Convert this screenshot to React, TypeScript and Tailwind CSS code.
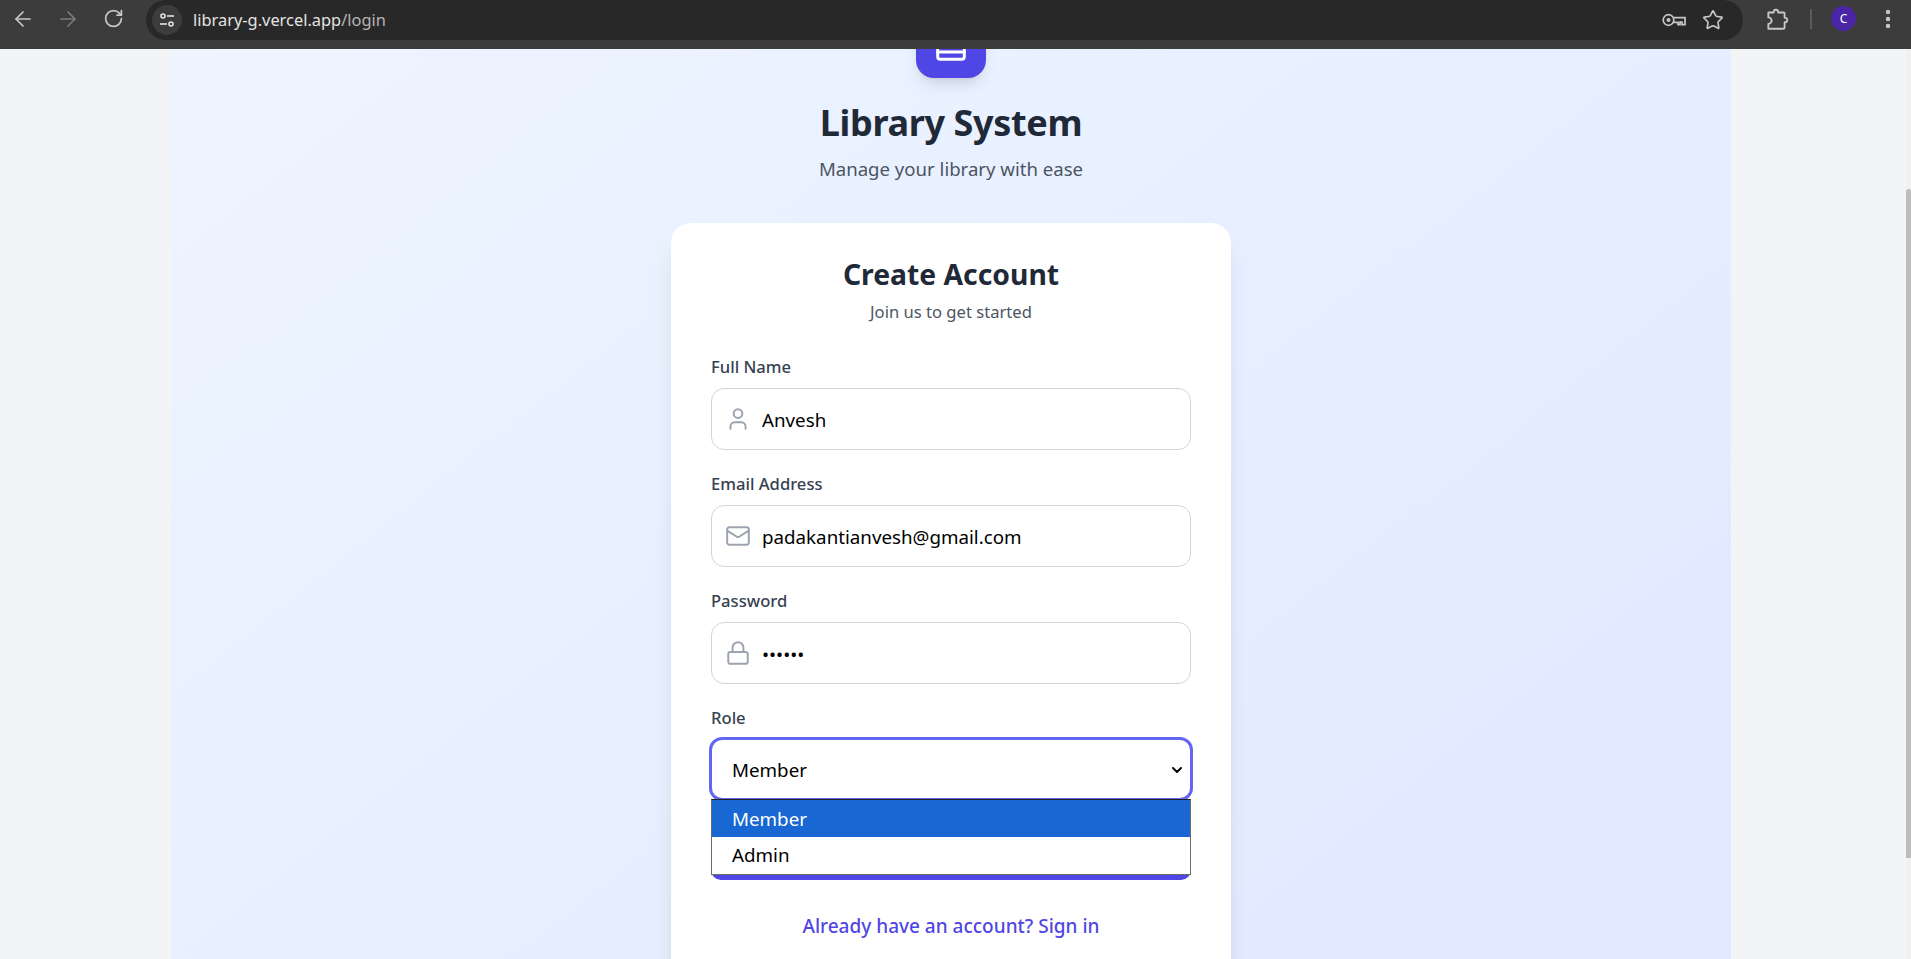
import { User, Mail, Lock, ArrowLeft, ArrowRight, RotateCw, Star, EllipsisVertical, ChevronDown } from "lucide-react";

const font = "font-['Noto_Sans',sans-serif]";

function Key() {
  return (
    <svg width="24" height="14" viewBox="0 0 24 14" fill="none" stroke="#c7c7c7" strokeWidth="1.7">
      <circle cx="6.5" cy="7" r="5.3" />
      <circle cx="6.5" cy="7" r="2" fill="#c7c7c7" stroke="none" />
      <path d="M11.3 4.6H23v7h-3v-2.4h-2v2.4h-2V9.4h-4.7" />
    </svg>
  );
}

function Tune() {
  return (
    <svg width="18" height="18" viewBox="0 0 18 18" fill="none" stroke="#e3e3e3" strokeWidth="1.6">
      <circle cx="5" cy="5" r="2" />
      <path d="M9 5h7" />
      <circle cx="13" cy="13" r="2" />
      <path d="M2 13h7" />
    </svg>
  );
}

function Extension() {
  return (
    <svg width="26" height="26" viewBox="0 0 24 24" fill="none" stroke="#c7c7c7" strokeWidth="1.7" strokeLinejoin="round">
      <path d="M4 6h5v-.5a2 2 0 0 1 4 0V6h5a1 1 0 0 1 1 1v4h.5a2 2 0 0 1 0 4H19v5a1 1 0 0 1-1 1H4v-4.5a3 3 0 0 0 0-6z" />
    </svg>
  );
}

function Field({ label, icon, value, type = "text" }: { label: string; icon: React.ReactNode; value: string; type?: string }) {
  return (
    <div className="mb-[23px]">
      <label className="block h-[21px] text-[16.6px] leading-[21px] font-medium text-[#374151] mb-[11px]">{label}</label>
      <div className="relative">
        <div className="absolute left-[14px] top-1/2 -translate-y-1/2 flex text-[#9ca3af]">{icon}</div>
        <input
          readOnly
          type={type}
          value={value}
          className="block w-full h-[62px] rounded-[13px] border-[1.5px] border-[#d1d5db] bg-white pl-[50px] pr-4 text-[18.75px] text-black outline-none"
        />
      </div>
    </div>
  );
}

export default function App() {
  return (
    <div className={`${font} h-[959px] w-full overflow-hidden flex flex-col bg-[#f3f4f6]`}>
      <header className="h-[49px] shrink-0 bg-[#3c3c3c] flex items-start text-[#c7c7c7]">
        <div className="flex items-center h-[37px] w-[146px] shrink-0 pl-[11px]">
          <ArrowLeft size={24} strokeWidth={1.7} className="text-[#c7c7c7]" />
          <ArrowRight size={24} strokeWidth={1.7} className="ml-[21px] text-[#7a7a7a]" />
          <RotateCw size={21} strokeWidth={2} className="ml-[23px] text-[#c7c7c7]" />
        </div>
        <div className="h-[40px] w-[1597px] shrink-0 rounded-full bg-[#282828] flex items-center pl-[6px] pr-[19px]">
          <div className="w-[30px] h-[30px] rounded-full bg-[#3c3c3c] flex items-center justify-center shrink-0">
            <Tune />
          </div>
          <span className="ml-[11px] text-[16.4px] text-[#e3e3e3]">
            library-g.vercel.app<span className="text-[#b4b4b4]">/login</span>
          </span>
          <div className="ml-auto flex items-center gap-[16px]">
            <Key />
            <Star size={22} strokeWidth={1.8} className="text-[#c7c7c7]" />
          </div>
        </div>
        <div className="flex-1 h-[37px] flex items-center pl-[21px]">
          <Extension />
          <div className="ml-[20px] w-[2px] h-[20px] bg-[#5c5c5c]" />
          <div className="ml-[19px] w-[25px] h-[25px] rounded-full bg-[#4a26a6] text-white text-[12px] flex items-center justify-center">C</div>
          <EllipsisVertical size={24} strokeWidth={2.5} className="ml-[20px] text-[#c7c7c7]" />
        </div>
      </header>

      <div className="flex-1 flex min-h-0 overflow-hidden">
        <div className="w-[171px] shrink-0" />
        <main className="w-[1560px] shrink-0 bg-[linear-gradient(to_bottom_right,#eff6ff,#e0e7ff)] bg-[length:100%_1238px] bg-[position:0_-190px] flex flex-col items-center">
          <div className="w-[70px] h-[70px] -mt-[41px] shrink-0 rounded-[18px] bg-[#4f46e5] shadow-lg flex items-center justify-center">
            <svg width="40" height="40" viewBox="0 0 40 40" fill="none" stroke="#fff" strokeWidth="3" strokeLinecap="round" strokeLinejoin="round">
              <rect x="6.7" y="2" width="26.6" height="34.2" rx="2.5" />
              <path d="M6.7 29h26.6" />
            </svg>
          </div>
          <h1 className="mt-[19px] text-[36px] leading-[52px] tracking-[-0.35px] font-bold text-[#1f2937]">Library System</h1>
          <p className="mt-[7px] text-[18.6px] leading-[26px] text-[#4b5563]">Manage your library with ease</p>
          <section className="mt-[41px] w-[560px] h-[800px] shrink-0 rounded-[20px] bg-white shadow-[0_20px_25px_-5px_rgba(0,0,0,0.1),0_8px_10px_-6px_rgba(0,0,0,0.1)] px-[40px] pt-[29px]">
            <h2 className="text-center text-[28.3px] leading-[44px] font-bold text-[#1f2937]">Create Account</h2>
            <p className="mt-[4px] text-center text-[16.6px] leading-[24px] text-[#4b5563]">Join us to get started</p>
            <div className="mt-[32px]">
              <Field label="Full Name" value="Anvesh" icon={<User size={26} strokeWidth={1.8} />} />
              <Field label="Email Address" value="padakantianvesh@gmail.com" icon={<Mail size={26} strokeWidth={1.8} />} />
              <Field label="Password" value="123456" type="password" icon={<Lock size={26} strokeWidth={1.8} />} />
              <label className="block h-[21px] text-[16.6px] leading-[21px] font-medium text-[#374151] mb-[9px]">Role</label>
              <div className="relative -mx-[2px]">
                <div className="h-[64px] rounded-[13px] border-[3.5px] border-[#6366f1] bg-white flex items-center pl-[20px] pr-[5px] pt-[2px] text-[18.75px] text-black">
                  Member
                  <ChevronDown size={16} strokeWidth={3} className="ml-auto" />
                </div>
                <div className="absolute left-[2px] right-[2px] top-[62px] h-[81px] rounded-b-[10px] bg-[#4f46e5]">
                  <div className="h-[76px] border border-[#6b6b6b] border-t-[#222222] bg-white text-[18.75px] text-black">
                    <div className="h-[37px] pl-[20px] pt-[1px] flex items-center bg-[#1967d2] text-white">Member</div>
                    <div className="h-[37px] pl-[20px] flex items-center">Admin</div>
                  </div>
                </div>
              </div>
              <p className="mt-[112px] text-center text-[19px] leading-[26px] font-medium text-[#4f46e5]">Already have an account? Sign in</p>
            </div>
          </section>
        </main>
        <div className="flex-1 flex justify-end">
          <div className="w-[5px] bg-[#f1f1f1] flex flex-col">
            <div className="mt-[140px] h-[669px] rounded-t-[3px] bg-[#bdbdbd]" />
          </div>
        </div>
      </div>
    </div>
  );
}
